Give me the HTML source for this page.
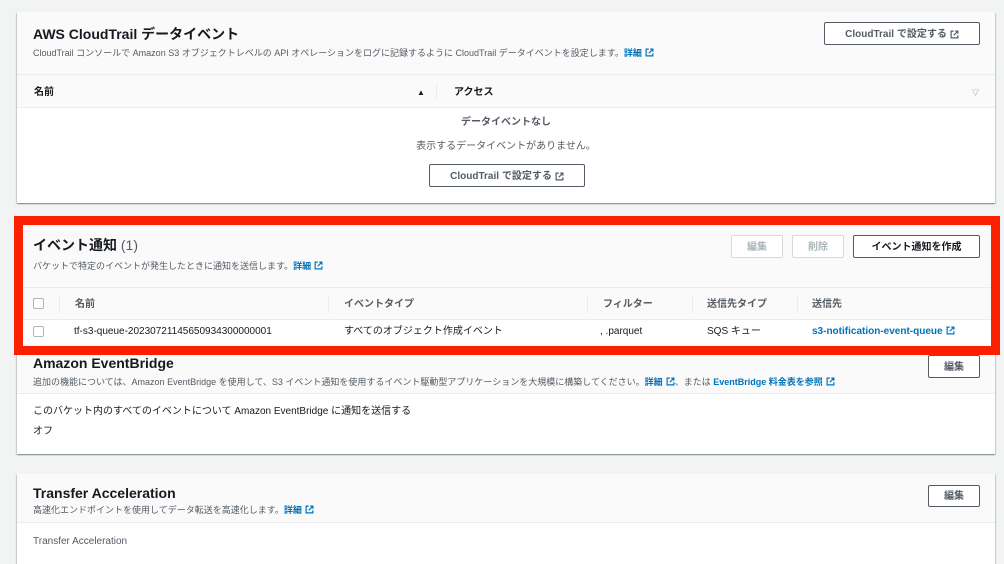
<!DOCTYPE html>
<html><head><meta charset="utf-8"><style>
*{box-sizing:border-box;margin:0;padding:0}
body{width:1004px;height:552px;overflow:hidden;background:#f2f3f3;font-family:"Liberation Sans","Noto Sans CJK JP",sans-serif;color:#16191f;position:relative}
.p{position:absolute;left:17px;width:978px;background:#fff;box-shadow:0 1px 1px rgba(0,28,36,.3),1px 1px 1px rgba(0,28,36,.15),-1px 1px 1px rgba(0,28,36,.15)}
.hd{background:#fafafa;position:relative;border-bottom:1px solid #eaeded}
.t{position:absolute;left:16px;font-size:14px;font-weight:bold;line-height:18px;height:18px}
.s{position:absolute;left:16px;font-size:9px;color:#545b64;white-space:nowrap;line-height:12px;height:12px}
.lk{color:#0073bb;font-weight:bold}
.ic{display:inline-block;width:9px;height:9px;vertical-align:-1px;margin-left:3px}
.btn{position:absolute;border:1px solid #545b64;background:#fff;font-size:10px;font-weight:bold;color:#545b64;border-radius:2px;display:flex;align-items:center;justify-content:center;line-height:12px;white-space:nowrap;padding-top:2px}
.dis{border-color:#d5dbdb;color:#aab7b8}
.abs{position:absolute;white-space:nowrap;line-height:12px;height:12px}
.th{position:absolute;left:0;right:0;background:#fafafa;border-bottom:1px solid #eaeded;font-size:10px;font-weight:bold;color:#545b64}
.sep{position:absolute;width:1px;background:#eaeded}
.cb{position:absolute;width:11px;height:11px;border:1px solid #aab7b8;border-radius:2px;background:#fff}
</style></head><body>
<svg width="0" height="0" style="position:absolute"><defs><symbol id="ex" viewBox="0 0 12 12"><path d="M5 1.5H1.5v9h9V7M7 1.5h3.5V5M10.5 1.5L5 7" fill="none" stroke="currentColor" stroke-width="1.6"/></symbol></defs></svg>

<!-- panel 1 -->
<div class="p" style="top:12px;height:191px">
 <div class="hd" style="height:63px">
  <div class="t" style="top:13px">AWS CloudTrail データイベント</div>
  <div class="s" style="top:35px">CloudTrail コンソールで Amazon S3 オブジェクトレベルの API オペレーションをログに記録するように CloudTrail データイベントを設定します。<span class="lk">詳細<svg class="ic"><use href="#ex"/></svg></span></div>
  <div class="btn" style="left:807px;top:10px;width:156px;height:23px">CloudTrail で設定する <svg class="ic"><use href="#ex"/></svg></div>
 </div>
 <div class="th" style="top:63px;height:33px">
  <div class="abs" style="left:17px;top:12px;color:#16191f">名前</div>
  <div class="abs" style="left:400px;top:12px;font-size:8px;color:#16191f">▲</div>
  <div class="sep" style="left:419px;top:8px;height:17px"></div>
  <div class="abs" style="left:437px;top:12px;color:#16191f">アクセス</div>
  <div class="abs" style="left:955px;top:13px;font-size:7px;color:#879596">▽</div>
 </div>
 <div class="abs" style="left:0;right:0;top:105px;text-align:center;font-size:10px;font-weight:bold;color:#545b64">データイベントなし</div>
 <div class="abs" style="left:0;right:0;top:129px;text-align:center;font-size:10px;color:#545b64">表示するデータイベントがありません。</div>
 <div class="btn" style="left:412px;top:152px;width:156px;height:23px">CloudTrail で設定する <svg class="ic"><use href="#ex"/></svg></div>
</div>

<!-- panel EventBridge -->
<div class="p" style="top:340px;height:114px">
 <div class="hd" style="height:54px">
  <div class="t" style="top:14px">Amazon EventBridge</div>
  <div class="s" style="top:36px">追加の機能については、Amazon EventBridge を使用して、S3 イベント通知を使用するイベント駆動型アプリケーションを大規模に構築してください。<span class="lk">詳細<svg class="ic"><use href="#ex"/></svg></span>、または <span class="lk">EventBridge 料金表を参照<svg class="ic"><use href="#ex"/></svg></span></div>
  <div class="btn" style="left:911px;top:15px;width:52px;height:23px">編集</div>
 </div>
 <div class="abs" style="left:16px;top:66px;font-size:10px;color:#16191f">このバケット内のすべてのイベントについて Amazon EventBridge に通知を送信する</div>
 <div class="abs" style="left:16px;top:86px;font-size:10px;color:#16191f">オフ</div>
</div>

<!-- panel Transfer -->
<div class="p" style="top:474px;height:90px">
 <div class="hd" style="height:49px">
  <div class="t" style="top:10px">Transfer Acceleration</div>
  <div class="s" style="top:30px">高速化エンドポイントを使用してデータ転送を高速化します。<span class="lk">詳細<svg class="ic"><use href="#ex"/></svg></span></div>
  <div class="btn" style="left:911px;top:11px;width:52px;height:22px">編集</div>
 </div>
 <div class="abs" style="left:16px;top:62px;font-size:10px;color:#545b64">Transfer Acceleration</div>
</div>

<!-- panel event notification -->
<div class="p" style="top:226px;height:124px;left:20px;width:975px;background:#fafafa">
 <div style="position:absolute;left:0;right:0;top:0;height:61px;background:#fafafa">
  <div class="t" style="top:10px;left:13px">イベント通知 <span style="font-weight:normal;color:#545b64">(1)</span></div>
  <div class="s" style="top:34px;left:13px">バケットで特定のイベントが発生したときに通知を送信します。<span class="lk">詳細<svg class="ic"><use href="#ex"/></svg></span></div>
  <div class="btn dis" style="left:711px;top:9px;width:52px;height:23px">編集</div>
  <div class="btn dis" style="left:772px;top:9px;width:52px;height:23px">削除</div>
  <div class="btn" style="left:833px;top:9px;width:127px;height:23px;color:#16191f">イベント通知を作成</div>
 </div>
 <div class="th" style="top:61px;height:33px;border-top:1px solid #eaeded">
  <div class="cb" style="left:13px;top:10px"></div>
  <div class="sep" style="left:39px;top:8px;height:17px"></div>
  <div class="abs" style="left:55px;top:11px">名前</div>
  <div class="sep" style="left:308px;top:8px;height:17px"></div>
  <div class="abs" style="left:324px;top:11px">イベントタイプ</div>
  <div class="sep" style="left:567px;top:8px;height:17px"></div>
  <div class="abs" style="left:583px;top:11px">フィルター</div>
  <div class="sep" style="left:672px;top:8px;height:17px"></div>
  <div class="abs" style="left:687px;top:11px">送信先タイプ</div>
  <div class="sep" style="left:777px;top:8px;height:17px"></div>
  <div class="abs" style="left:792px;top:11px">送信先</div>
 </div>
 <div style="position:absolute;left:0;right:0;top:94px;height:24px;background:#fff;font-size:10px">
  <div class="cb" style="left:13px;top:6px"></div>
  <div class="abs" style="left:54px;top:6px">tf-s3-queue-20230721145650934300000001</div>
  <div class="abs" style="left:324px;top:6px">すべてのオブジェクト作成イベント</div>
  <div class="abs" style="left:580px;top:6px">, .parquet</div>
  <div class="abs" style="left:687px;top:6px">SQS キュー</div>
  <div class="abs lk" style="left:792px;top:6px">s3-notification-event-queue<svg class="ic"><use href="#ex"/></svg></div>
 </div>
</div>

<!-- red highlight -->
<div style="position:absolute;left:14px;top:216px;width:986px;height:139px;border:9px solid #fa2000"></div>
</body></html>
